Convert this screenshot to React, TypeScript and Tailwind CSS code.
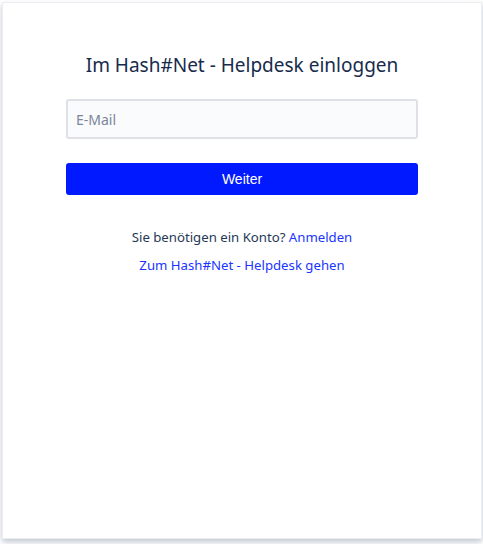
export default function App() {
  return (
    <div className="w-[483px] h-[544px] bg-white overflow-hidden" style={{ fontFamily: '"Noto Sans", "Open Sans", sans-serif' }}>
      <div className="ml-[2px] mt-[2px] w-[480px] h-[537px] bg-white border border-[#eceef1] shadow-[0_3px_6px_rgba(9,30,66,0.25)] flex flex-col items-center px-[63px] pt-[48px]">
        <h1 className="text-[19px] leading-[28px] text-[#172b4d] font-normal">Im Hash#Net - Helpdesk einloggen</h1>
        <div className="mt-[20px] w-[352px] h-[40px] bg-[#fafbfc] border-2 border-[#dfe1e6] rounded-[3px] flex items-center px-[8px]">
          <span className="text-[14px] text-[#7a869a]">E-Mail</span>
        </div>
        <button className="mt-[24px] w-[352px] h-[32px] bg-[#0019ff] rounded-[3px] text-white text-[14px]" style={{ fontFamily: '"Liberation Sans", Arial, sans-serif' }}>Weiter</button>
        <p className="mt-[32px] text-[13.2px] leading-[20px] text-[#253858]">
          Sie benötigen ein Konto? <span className="text-[#1a35ff]">Anmelden</span>
        </p>
        <p className="mt-[8px] text-[13.2px] leading-[20px] text-[#1a35ff]">Zum Hash#Net - Helpdesk gehen</p>
      </div>
    </div>
  );
}
